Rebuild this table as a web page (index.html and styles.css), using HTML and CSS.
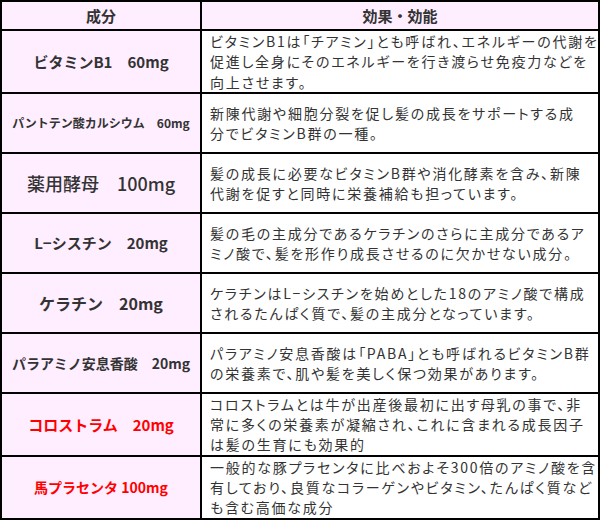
FILE: index.html
```html
<!DOCTYPE html>
<html lang="ja">
<head>
<meta charset="utf-8">
<link rel="stylesheet" href="styles.css">
</head>
<body>
<table class="tbl">
  <thead>
    <tr class="head">
      <th class="name">成分</th>
      <th class="desc">効果・効能</th>
    </tr>
  </thead>
  <tbody>
    <tr class="r62">
      <td class="name n15">ビタミンB1　60mg</td>
      <td class="desc">ビタミンB1は「チアミン」とも呼ばれ、エネルギーの代謝を<br>促進し全身にそのエネルギーを行き渡らせ免疫力などを<br>向上させます。</td>
    </tr>
    <tr class="r60">
      <td class="name n12">パントテン酸カルシウム　60mg</td>
      <td class="desc">新陳代謝や細胞分裂を促し髪の成長をサポートする成<br>分でビタミンB群の一種。</td>
    </tr>
    <tr class="r60">
      <td class="name n18">薬用酵母　100mg</td>
      <td class="desc">髪の成長に必要なビタミンB群や消化酵素を含み、新陳<br>代謝を促すと同時に栄養補給も担っています。</td>
    </tr>
    <tr class="r60">
      <td class="name n15">L−シスチン　20mg</td>
      <td class="desc">髪の毛の主成分であるケラチンのさらに主成分であるア<br>ミノ酸で、髪を形作り成長させるのに欠かせない成分。</td>
    </tr>
    <tr class="r60">
      <td class="name n16">ケラチン　20mg</td>
      <td class="desc">ケラチンはL−シスチンを始めとした18のアミノ酸で構成<br>されるたんぱく質で、髪の主成分となっています。</td>
    </tr>
    <tr class="r60">
      <td class="name n14">パラアミノ安息香酸　20mg</td>
      <td class="desc">パラアミノ安息香酸は「PABA」とも呼ばれるビタミンB群<br>の栄養素で、肌や髪を美しく保つ効果があります。</td>
    </tr>
    <tr class="r62">
      <td class="name n15 red">コロストラム　20mg</td>
      <td class="desc">コロストラムとは牛が出産後最初に出す母乳の事で、非<br>常に多くの栄養素が凝縮され、これに含まれる成長因子<br>は髪の生育にも効果的</td>
    </tr>
    <tr class="r62">
      <td class="name n14 red">馬プラセンタ 100mg</td>
      <td class="desc">一般的な豚プラセンタに比べおよそ300倍のアミノ酸を含<br>有しており、良質なコラーゲンやビタミン、たんぱく質など<br>も含む高価な成分</td>
    </tr>
  </tbody>
</table>
</body>
</html>
```
FILE: styles.css
```css
html, body {
  margin: 0;
  padding: 0;
  background: #ffffff;
}
body {
  font-family: "Noto Sans CJK JP", "Noto Sans", sans-serif;
  color: #333333;
}
.tbl {
  width: 600px;
  border-collapse: collapse;
  table-layout: fixed;
  border: 2px solid #000;
}
.tbl th, .tbl td {
  border: 2px solid #000;
  padding: 0;
}
.head {
  height: 29px;
}
.head th {
  background: #ffeeff;
  font-size: 15px;
  font-weight: bold;
  text-align: center;
  line-height: 22px;
}
.name {
  width: 198px;
}
.tbl td.name {
  background: #ffeeff;
  text-align: center;
  font-weight: bold;
  white-space: nowrap;
}
.tbl td.desc {
  padding: 0 4px 0 8px;
  font-size: 14px;
  letter-spacing: 1.75px;
  line-height: 20.3px;
  font-feature-settings: "palt";
  white-space: nowrap;
  overflow: hidden;
  vertical-align: middle;
}
.r60 { height: 60px; }
.r62 { height: 61px; }
.n12 { font-size: 12px; }
.n14 { font-size: 14px; }
.n15 { font-size: 15px; }
.n16 { font-size: 16px; }
.tbl td.n18 { font-size: 18px; font-weight: 500; }
.red { color: #ff0000; }
```
